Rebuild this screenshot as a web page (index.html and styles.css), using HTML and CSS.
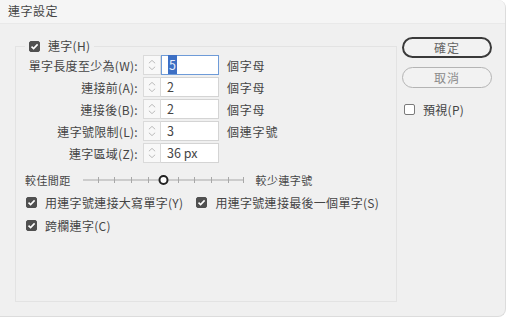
FILE: index.html
```html
<!DOCTYPE html>
<html lang="zh-Hant">
<head>
    <meta charset="UTF-8">
    <link rel="stylesheet" href="styles.css">
    <title>連字設定</title>
</head>
<body>
    <div class="dialog">
        <!-- Barra de título -->
        <div class="titlebar">連字設定</div>

        <div class="content">
            <!-- Grupo principal -->
            <fieldset class="group">
                <legend class="check-line">
                    <span class="box checked"><svg viewBox="0 0 11 11"><path d="M2.5 5.6 L4.6 7.6 L8.6 3.4" /></svg></span>
                    <span>連字(H)</span>
                </legend>

                <div class="field">
                    <label class="field-label">單字長度至少為(W):</label>
                    <span class="spin"><svg viewBox="0 0 18 20"><path d="M5.5 8 L9 4.8 L12.5 8 M5.5 12 L9 15.2 L12.5 12" /></svg></span>
                    <span class="input focus"><span class="sel">5</span></span>
                    <span class="unit">個字母</span>
                </div>
                <div class="field">
                    <label class="field-label">連接前(A):</label>
                    <span class="spin"><svg viewBox="0 0 18 20"><path d="M5.5 8 L9 4.8 L12.5 8 M5.5 12 L9 15.2 L12.5 12" /></svg></span>
                    <span class="input">2</span>
                    <span class="unit">個字母</span>
                </div>
                <div class="field">
                    <label class="field-label">連接後(B):</label>
                    <span class="spin"><svg viewBox="0 0 18 20"><path d="M5.5 8 L9 4.8 L12.5 8 M5.5 12 L9 15.2 L12.5 12" /></svg></span>
                    <span class="input">2</span>
                    <span class="unit">個字母</span>
                </div>
                <div class="field">
                    <label class="field-label">連字號限制(L):</label>
                    <span class="spin"><svg viewBox="0 0 18 20"><path d="M5.5 8 L9 4.8 L12.5 8 M5.5 12 L9 15.2 L12.5 12" /></svg></span>
                    <span class="input">3</span>
                    <span class="unit">個連字號</span>
                </div>
                <div class="field">
                    <label class="field-label">連字區域(Z):</label>
                    <span class="spin"><svg viewBox="0 0 18 20"><path d="M5.5 8 L9 4.8 L12.5 8 M5.5 12 L9 15.2 L12.5 12" /></svg></span>
                    <span class="input">36 px</span>
                </div>

                <!-- Controle deslizante -->
                <div class="slider-row">
                    <span class="small">較佳間距</span>
                    <svg class="track" width="162" height="14" viewBox="0 0 162 14">
                        <path d="M0 7 H161 M15.5 4 V10 M31.5 4 V10 M48.5 4 V10 M65.5 4 V10 M95.5 4 V10 M111.5 4 V10 M128.5 4 V10 M145.5 4 V10 M160.5 4 V10" />
                        <circle cx="80.5" cy="7" r="4" />
                    </svg>
                    <span class="small">較少連字號</span>
                </div>

                <div class="check-row">
                    <span class="check-line">
                        <span class="box checked"><svg viewBox="0 0 11 11"><path d="M2.5 5.6 L4.6 7.6 L8.6 3.4" /></svg></span>
                        <span>用連字號連接大寫單字(Y)</span>
                    </span>
                    <span class="check-line">
                        <span class="box checked"><svg viewBox="0 0 11 11"><path d="M2.5 5.6 L4.6 7.6 L8.6 3.4" /></svg></span>
                        <span>用連字號連接最後一個單字(S)</span>
                    </span>
                </div>
                <div class="check-row">
                    <span class="check-line">
                        <span class="box checked"><svg viewBox="0 0 11 11"><path d="M2.5 5.6 L4.6 7.6 L8.6 3.4" /></svg></span>
                        <span>跨欄連字(C)</span>
                    </span>
                </div>
            </fieldset>

            <!-- Botões -->
            <div class="actions">
                <button class="btn primary">確定</button>
                <button class="btn">取消</button>
                <span class="check-line preview">
                    <span class="box"></span>
                    <span>預視(P)</span>
                </span>
            </div>
        </div>
    </div>
</body>
</html>
```

FILE: styles.css
```css
/* =======================
   Geral
======================= */
body {
    margin: 0;
    background-color: #ffffff;
    font-family: "Noto Sans CJK TC", "Noto Sans", sans-serif;
    font-size: 12px;
    color: #454545;
}

.dialog {
    width: 506px;
    height: 317px;
    background-color: #f0f0f0;
    border: 1px solid #dcdcdc;
    border-top: none;
    border-left: none;
    border-radius: 0 8px 8px 0;
    box-sizing: border-box;
    overflow: hidden;
}

.titlebar {
    height: 24px;
    line-height: 22px;
    padding-left: 8px;
    background-color: #f5f5f5;
    border-bottom: 1px solid #e9e9e9;
    box-sizing: border-box;
    letter-spacing: 0.5px;
}

.content {
    display: flex;
    gap: 5px;
    padding: 13px 0 0 15px;
}

/* =======================
   Grupo
======================= */
.group {
    margin: 3px 0 0;
    width: 382px;
    height: 262px;
    box-sizing: border-box;
    border: 1px solid #e3e3e3;
    padding: 0 0 0 9px;
}

.group legend {
    padding: 0 4px;
    line-height: 12px;
}

.check-line {
    display: flex;
    align-items: center;
    gap: 8px;
    white-space: nowrap;
    letter-spacing: 0.3px;
}

.box {
    width: 11px;
    height: 11px;
    box-sizing: border-box;
    border: 1px solid #7a7a7a;
    border-radius: 2px;
    background-color: #fff;
    flex: none;
}

.box svg {
    display: block;
    width: 11px;
    height: 11px;
    margin: -1px;
}

.box.checked {
    background-color: #505050;
    border-color: #505050;
}

.box path {
    fill: none;
    stroke: #fff;
    stroke-width: 1.6;
}

/* =======================
   Campos
======================= */
.field {
    display: flex;
    align-items: center;
    height: 20px;
    margin-bottom: 2px;
}

.field:first-of-type {
    margin-top: 3px;
}

.field-label {
    width: 113px;
    text-align: right;
    margin-right: 5px;
    white-space: nowrap;
    letter-spacing: 0.3px;
}

.spin {
    width: 18px;
    height: 20px;
    box-sizing: border-box;
    border: 1px solid #dadada;
    background-color: #f8f8f8;
}

.spin svg {
    display: block;
    width: 16px;
    height: 18px;
}

.spin path {
    fill: none;
    stroke: #b3b3b3;
    stroke-width: 1;
}

.input {
    width: 58px;
    height: 20px;
    box-sizing: border-box;
    border: 1px solid #d4d4d4;
    border-left: none;
    background-color: #fff;
    padding-left: 6px;
    line-height: 18px;
    font-size: 12.5px;
}

.input.focus {
    border: 1px solid #6e9bd8;
}

.sel {
    background-color: #3d6fc4;
    color: #e8eefa;
    padding: 0 1px;
}

.unit {
    margin-left: 8px;
    letter-spacing: 0.8px;
}

/* =======================
   Deslizante
======================= */
.slider-row {
    display: flex;
    align-items: center;
    height: 14px;
    margin-top: 10px;
}

.small {
    font-size: 11px;
    letter-spacing: 0.4px;
}

.track {
    margin: 0 11px 0 12px;
}

.track path {
    fill: none;
    stroke: #a8a8a8;
    stroke-width: 1;
}

.track circle {
    fill: #fff;
    stroke: #222;
    stroke-width: 2;
}

.check-row {
    display: flex;
    gap: 13px;
    height: 16px;
    align-items: center;
    margin-top: 7px;
    padding-left: 1px;
}

/* =======================
   Botões
======================= */
.actions {
    display: flex;
    flex-direction: column;
    width: 90px;
}

.btn {
    height: 21px;
    border-radius: 11px;
    border: 1px solid #b4b4b4;
    background-color: #f2f2f2;
    font-family: inherit;
    font-size: 12px;
    color: #8a8a8a;
    letter-spacing: 1px;
    padding: 0;
    margin-bottom: 9px;
}

.btn.primary {
    border: 2px solid #3a3a3a;
    color: #666;
}

.preview {
    margin: 4px 0 0 2px;
}
```
